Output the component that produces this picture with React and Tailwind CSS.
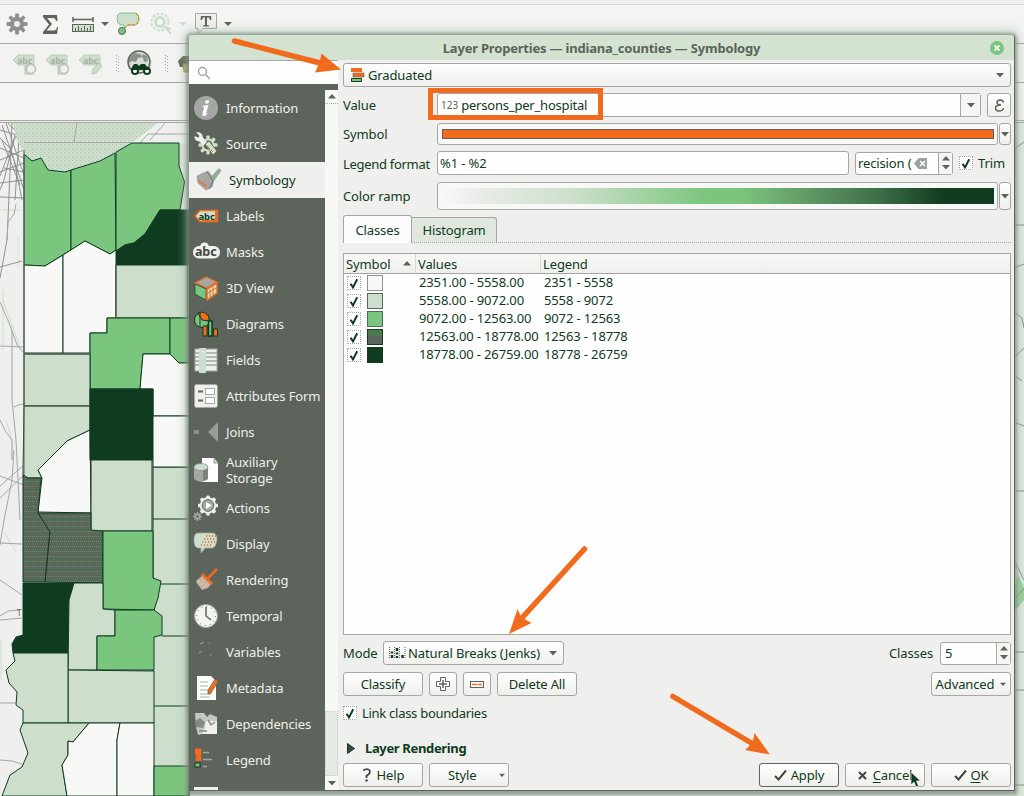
import React from "react";

const DARK = "#0f3b20";
const GRAY = "#5c645b";
const MID = "#a5a7a4";
const GREEN = "#7bc67e";
const LIGHT = "#cddfcc";
const PAPER = "#efefed";
const ORANGE = "#f26a1b";

/* ---------- small shared pieces ---------- */

function Down({ className = "" }) {
  return (
    <svg width="8" height="5" viewBox="0 0 8 5" className={"shrink-0 " + className}>
      <path d="M0 0h8L4 4.6z" fill={GRAY} />
    </svg>
  );
}

function Up({ className = "" }) {
  return (
    <svg width="8" height="5" viewBox="0 0 8 5" className={"shrink-0 " + className}>
      <path d="M0 4.6h8L4 0z" fill={GRAY} />
    </svg>
  );
}

function Check({ className = "" }) {
  return (
    <span className={"flex size-[14px] shrink-0 items-center justify-center rounded-[1px] border border-dotted border-[#a5a7a4] bg-[#fefefe] " + className}>
      <svg width="10" height="11" viewBox="0 0 10 11">
        <path d="M1.5 5.8 4 9.4 8.2 1.2" fill="none" stroke={DARK} strokeWidth="2" />
      </svg>
    </span>
  );
}

function Button({ className = "", children }) {
  return (
    <button className={"flex h-[24px] shrink-0 items-center justify-center rounded-[3px] border border-[#a5a7a4] bg-gradient-to-b from-[#fefefe] to-[#efefed] whitespace-nowrap " + className}>
      {children}
    </button>
  );
}

function Spinner() {
  return (
    <span className="flex h-full w-[14px] shrink-0 flex-col items-center justify-center gap-[4px] border-l border-[#a5a7a4] bg-[#f5f5f4]">
      <Up />
      <Down />
    </span>
  );
}

/* ---------- background map ---------- */

const counties = [
  [LIGHT, "153,467 189,467 189,796 153,796"],
  [GREEN, "24,154 32,161 41,158 48,170 65,172 71,170 71,250 45,266 24,265"],
  [GREEN, "71,170 100,161 115,153 116,250 110,254 85,241 71,250"],
  [GREEN, "116,152 132,143 179,143 179,166 184.5,182 180,210 160,210 145,234 134,243 125,245 116,251"],
  [DARK, "160,210 189,210 189,265 116,265 116,251 125,245 134,243 145,234"],
  ["#f8f8f7", "24,265 45,266 63,255 63,353 24,353"],
  ["#f8f8f7", "63,255 85,241 110,254 116,250 116,318 107,318 107,333 90,333 90,353 63,353"],
  [LIGHT, "116,265 188,265 188,318 116,318"],
  [GREEN, "107,318 170,318 170,354 143,354 140,389 90,389 90,333 107,333"],
  [GREEN, "170,318 189,318 189,363 179,363 170,354"],
  ["#f8f8f7", "143,354 170,354 179,363 189,363 189,416 153,416 153,389 140,389"],
  [LIGHT, "24,354 90,354 90,406 24,406"],
  [LIGHT, "24,406 90,406 90,430 67,441 38,470 42,478 28,478 23,475"],
  ["#f8f8f7", "90,430 67,441 38,470 42,478 38,512 91,513"],
  [DARK, "90,389 153,389 153,460 90,460"],
  ["#f8f8f7", "153,416 189,416 189,467 153,467"],
  [LIGHT, "91,460 152,460 152,531 91,531"],
  ["url(#hatch)", "23,475 28,478 41,478 38,512 50,532 45,582 23,582"],
  ["url(#hatch)", "38,513 91,513 91,530 103,531 103,583 45,582 50,532"],
  [GREEN, "103,531 153,531 153,578 161,581 158,598 154,610 103,609"],
  [DARK, "23,583 74,583 69,600 68,653 13,653 12,644 16,637 23,635"],
  [LIGHT, "74,583 103,583 103,609 115,610 115,636 97,636 97,670 68,670 69,600"],
  [GREEN, "115,610 154,610 162,616 162,635 154,637 154,670 97,670 97,636 115,636"],
  [LIGHT, "68,670 154,671 154,723 68,723"],
  [LIGHT, "13,653 68,653 68,723 23,723 23,710 16,705 17,692 9,683 6,670 15,661"],
  [LIGHT, "23,723 89,723 73,742 68,741 68,755 62,765 67,796 2,796 10,775 22,767 28,753 20,730"],
  ["#f8f8f7", "89,723 120,723 117,740 117,796 67,796 62,765 68,755 68,741 73,742"],
  ["#f8f8f7", "120,723 154,723 154,796 117,796 117,740"],
  [GREEN, "154,766 189,766 189,796 154,796"],
];

const roads = [
  "0,138 10,148 24,190", "2,125 14,160 22,200", "0,160 24,150", "0,172 24,163", "0,197 24,198", "18,123 4,180 0,190",
  "6,123 24,175", "0,130 24,137", "12,123 9,196 7,240 0,278", "0,267 22,261",
  "0,148 24,158", "8,123 24,140", "20,123 15,200", "0,183 24,180", "2,140 20,185", "0,176 14,140 20,128", "4,168 24,172",
];

const quietRoads = [
  "0,302 10,325 17,345 24,353", "0,346 24,347", "12,330 12,400 16,440 20,520", "0,420 6,432 12,440 12,460",
  "14,450 12,480 4,520 0,545", "0,543 22,544", "0,580 22,595", "0,620 22,618", "0,616 8,611 20,610",
  "0,703 16,703", "0,760 12,761 22,764", "0,486 24,465", "0,476 24,485", "0,498 24,475",
  "16,204 14,214 8,222 7,240", "14,407 18,405 24,404",
];

function MapCanvas() {
  return (
    <svg width="1024" height="673" viewBox="0 123 1024 673" className="block shrink-0">
      <defs>
        <pattern id="hatch" width="4" height="5" patternUnits="userSpaceOnUse">
          <rect width="4" height="5" fill={GRAY} />
          <path d="M0 1.5h4" stroke="#4f9a5a" strokeWidth="1" strokeDasharray="1 1" />
          <path d="M1 3.5h4" stroke="#467f50" strokeWidth="1" strokeDasharray="1 3" />
        </pattern>
        <pattern id="dots" width="4" height="4" patternUnits="userSpaceOnUse">
          <rect width="4" height="4" fill={LIGHT} />
          <rect width="1" height="1" fill="#b3bfb2" />
          <rect x="2" y="2" width="1" height="1" fill="#b9c6b8" />
        </pattern>
      </defs>
      <rect y="123" width="1024" height="673" fill={PAPER} />
      <path d="M3 290v60M6 420l6 20v20M1 640v40M4 532l12 20M0 210h22M3 300l18 50M18 236v30" stroke={LIGHT} fill="none" />
      <g fill="none" stroke="#858a84" strokeWidth="0.9">
        {roads.map((p) => <polyline key={p} points={p} />)}
      </g>
      <g fill="none" stroke="#a5a7a4" strokeWidth="1">
        {quietRoads.map((p) => <polyline key={p} points={p} />)}
      </g>
      <polygon points="13,123 158,123 132,143 100,161 65,172 48,170 41,158 32,161 24,154 16,138" fill="url(#dots)" />
      <path d="M77 123 74 142M24 142.500h107M150 140l15-17M140 143l8-9h41" stroke="#a5a7a4" fill="none" />
      <rect x="179" y="144" width="10" height="66" fill="#e2e6e1" />
      <g stroke={DARK} strokeWidth="1" strokeLinejoin="round">
        {counties.map(([fill, points]) => <polygon key={points} points={points} fill={fill} />)}
      </g>
      <path d="M153 519h36M161 584h28M162 636h27M154 706h35" stroke={DARK} />
      <path d="M24 150v325M116 265v53M24 354h66M24 406h66" stroke={GRAY} />
      <text x="17" y="616" fontSize="8" fill={GRAY} fontFamily="Noto Sans, sans-serif">T</text>
      <rect x="1014" y="123" width="10" height="673" fill="#e2e8e1" />
      <path d="M1014 590l4-16 6 14v12l-10 12z" fill={GREEN} opacity=".7" />
      <path d="M1014 123l10-4M1014 149l10-7M1014 225h10M1014 268l10-4M1014 312l8 6 2 10M1014 358l10-10M1014 375l8 6M1014 422l10 4M1014 491h10M1014 560l10 20M1014 600l10-12M1014 652h10M1014 690h10M1014 785h10" fill="none" stroke="#858a84" />
    </svg>
  );
}

/* ---------- toolbars ---------- */

function Gear({ x, y, r, fill, hole }) {
  return (
    <g transform={`translate(${x} ${y})`}>
      {[0, 45, 90, 135].map((a) => (
        <rect key={a} x={-r * 0.18} y={-r} width={r * 0.36} height={r * 2} rx="1" fill={fill} transform={`rotate(${a})`} />
      ))}
      <circle r={r * 0.68} fill={fill} />
      <circle r={r * 0.28} fill={hole} />
    </g>
  );
}

function TopBar() {
  return (
    <svg width="240" height="37" viewBox="0 5 240 37" className="block">
      <Gear x={17} y={24} r={10.5} fill="#8d918c" hole={PAPER} />
      <path d="M43 15h14l.5 6h-1.500q-.5-3-3-3h-6l5 6-5.500 6.500h7q3 0 3.500-3.500H58l-1 7H43v-2l6-7.500-6-7.500z" fill={GRAY} />
      <path d="M73 17v5M93 17v5M73 19.500h20" stroke={GRAY} strokeWidth="1.500" />
      <rect x="72.500" y="24.500" width="21" height="7" fill={LIGHT} stroke={GRAY} />
      <path d="M75.500 28v3M78.500 26v5M81.500 28v3M84.500 26v5M87.500 28v3M90.500 26v5" stroke={GRAY} />
      <path d="M101 22h8l-4 4z" fill={GRAY} />
      <path d="M120 13h15q4 1 4 5v2q-1 5-5 5h-6l-4 4v-4h-3q-4-1-4-6t3-6z" fill={LIGHT} stroke={GREEN} />
      <path d="M136 13.500q3 2 2.500 6-1 5-4 5.500h-7l-3 3" fill="none" stroke={ORANGE} strokeDasharray="3 1.500" />
      <circle cx="122" cy="31" r="3.500" fill={GREEN} stroke={GRAY} />
      <g fill="none" stroke={LIGHT} strokeWidth="2">
        <circle cx="160" cy="22" r="8.500" strokeDasharray="3 1.500" />
        <circle cx="160" cy="22" r="4.500" strokeWidth="3" />
        <path d="m165 27 6 7M162 26l9 3" />
      </g>
      <path d="M179 22h8l-4 4z" fill={LIGHT} />
      <path d="M195.500 13.500h21v15H203l-5 5v-5h-2.500z" fill={PAPER} stroke={MID} />
      <path d="M201 16h10l.5 4H210l-1-2.500h-2v7.500l2 .5v1h-6v-1l2-.5v-7.500h-2L202 20h-1.500z" fill={GRAY} />
      <path d="M224 22h8l-4 4z" fill={GRAY} />
    </svg>
  );
}

function LabelTag({ x, kind }) {
  return (
    <g transform={`translate(${x} 0)`}>
      <path d="M0 60l5-5h16v10H5z" fill={LIGHT} stroke="#bccdbb" />
      <text x="4" y="64" fontSize="9" fontWeight="700" fill="#a5b3a4" fontFamily="Noto Sans, sans-serif">abc</text>
      {kind === 2 ? (
        <path d="m13 74 1-5 6-6 3 3-6 7z" fill={LIGHT} stroke="#b5c2b4" />
      ) : (
        <g>
          <rect x="12" y="66" width="8" height="8" fill={LIGHT} stroke="#b5c2b4" />
          <circle cx="18" cy="69" r="4.500" fill={PAPER} stroke="#b5c2b4" strokeWidth="1.500" />
        </g>
      )}
    </g>
  );
}

function SecondBar() {
  return (
    <svg width="189" height="38" viewBox="0 44 189 38" className="block">
      <LabelTag x={13} kind={0} />
      <LabelTag x={46} kind={1} />
      <LabelTag x={79} kind={2} />
      <path d="M116.500 55v17M118.500 56v17M165.500 55v17M167.500 56v17" stroke={MID} strokeDasharray="1 2" />
      <circle cx="139" cy="62" r="11" fill="#d5ddd4" stroke={GRAY} strokeWidth="1.500" />
      <path d="M129 58l5-5 6 1 3 3-5 1-2 4-4-1-3 2zM142 54l5 2 1 5-4 1z" fill="#8d918c" />
      <path d="M134 64h3l2 2 2-2h4l3 5h-17z" fill={DARK} />
      <circle cx="135" cy="71" r="3" fill="#fff" stroke={DARK} strokeWidth="2" />
      <circle cx="147" cy="71" r="3" fill="#fff" stroke={DARK} strokeWidth="2" />
      <path d="M133 66h14l2 4h-18z" fill={DARK} />
      <path d="M178 61l5-5h6v11h-9z" fill={GRAY} />
      <path d="M183 64h6v8h-5z" fill={GREEN} stroke={ORANGE} />
    </svg>
  );
}

/* ---------- sidebar icons ---------- */

const icons = {
  info: (
    <>
      <circle cx="12" cy="12" r="12" fill="#a5a7a4" />
      <path d="M12.500 4.500q2-1 2.500.5t-1.500 2.500-2.200-.8.200-1.700zM9 9.800l5.500-.8-2.300 8.200q-.2 1.400 2-.5-2 3.800-4.500 3.500-2-.5-1-3.500l1.500-5.500H8.500z" fill="#fff" />
    </>
  ),
  source: (
    <>
      <Gear x={14} y={13} r={9.5} fill="#cddfcc" hole={GRAY} />
      <circle cx="14" cy="13" r="4.500" fill={GRAY} />
      <path d="M2 0q6.500-.5 7 6l4 4-3.500 3.500-4-4Q0 9 .5 4l3.500 1.500 1.500-1.500z" fill="#efefed" />
      <path d="m11 12 4-3 8 10-4 4z" fill="#cddfcc" stroke={GRAY} strokeWidth=".8" />
      <path d="m13 14 3 3M17 18l2 2" stroke={ORANGE} />
    </>
  ),
  symbology: (
    <>
      <path d="M0 8 11 3l6 8-2 8-6 3-8-7z" fill="#a5a7a4" stroke="#8d918c" strokeWidth=".7" />
      <path d="m13 10 9-10 2.500 2.500L17 13z" fill="#8fb08f" />
      <path d="m10 4 6 9-4 8" stroke="#6f756e" fill="none" />
      <path d="m2 13 8 6" stroke={ORANGE} strokeWidth="2" strokeDasharray="2 1" />
    </>
  ),
  labels: (
    <>
      <path d="M1 12 6 6.500h17.500v11H6z" fill={LIGHT} stroke={ORANGE} strokeWidth="1.300" />
      <path d="M22 7v10H8" stroke={ORANGE} strokeWidth="2" fill="none" />
      <text x="4.500" y="15.500" fontSize="9.500" fontWeight="700" fill={DARK} fontFamily="Noto Sans, sans-serif">abc</text>
    </>
  ),
  masks: (
    <>
      <rect x="-1" y="6" width="27" height="12.500" rx="6" fill="#efefed" />
      <circle cx="10.500" cy="7" r="4.500" fill="#efefed" />
      <text x="1" y="15.500" fontSize="12.500" fontWeight="700" fill="#3c4a3e" fontFamily="Noto Sans, sans-serif">abc</text>
    </>
  ),
  cube: (
    <>
      <path d="m1 7 11-6 11 5-10 6z" fill="#a5a7a4" stroke={ORANGE} strokeWidth="1.500" strokeDasharray="3 1" />
      <path d="m1 8 11 5v11L1 18z" fill={GREEN} stroke={DARK} strokeWidth=".6" />
      <path d="m13 13 10-6v10l-10 7z" fill={LIGHT} stroke={ORANGE} strokeWidth="1.500" />
      <path d="m16 13v8m3-10v8m-5-2 8-5" stroke={ORANGE} />
    </>
  ),
  diagrams: (
    <>
      <circle cx="8" cy="8" r="7.500" fill={GREEN} stroke={DARK} />
      <path d="M8 8 4 1q7-3 11 4v4z" fill={ORANGE} stroke={DARK} />
      <path d="M6 1v14" stroke={DARK} />
      <path d="M9 14h4v10H9z" fill={ORANGE} stroke={DARK} />
      <path d="M14.500 9h3.500v15h-3.500z" fill={GREEN} stroke={DARK} strokeWidth="1.500" />
      <path d="M19.500 17h4v7h-4z" fill={ORANGE} stroke={DARK} />
    </>
  ),
  fields: (
    <>
      <rect x="1" y="1" width="22" height="22" fill="#efefed" stroke="#a5a7a4" />
      <path d="M12 5h11M12 9h11M12 13h11M12 17h11M1 5h4M1 9h4M1 13h4M1 17h4" stroke="#a5a7a4" strokeWidth="1.500" />
      <path d="M5 0h7v25H5z" fill={LIGHT} />
      <path d="M7 5l2-2 2 2" stroke="#efefed" fill="none" />
    </>
  ),
  form: (
    <>
      <rect x=".5" y=".5" width="23" height="23" rx="2" fill="#efefed" stroke="#a5a7a4" />
      <path d="M4 7.500h5M4 16.500h5" stroke={GRAY} strokeWidth="2" />
      <rect x="11.500" y="4.500" width="9" height="6" fill="#fff" stroke="#a5a7a4" />
      <rect x="11.500" y="13.500" width="9" height="6" fill="#fff" stroke="#a5a7a4" />
    </>
  ),
  joins: (
    <>
      <rect x="0" y="10" width="5" height="4" fill="#8d918c" />
      <path d="M24 2v20L14 12z" fill="#9a9e99" />
    </>
  ),
  storage: (
    <>
      <path d="M8 0h12l4 5v19H8z" fill="#fefefe" />
      <path d="M20 0v5h4" fill={LIGHT} stroke={GRAY} strokeWidth=".6" />
      <path d="M0 9v12q7 6 14 0V9z" fill="#a5a7a4" />
      <path d="M9 10v13l5-2V9z" fill="#7d827c" />
      <ellipse cx="7" cy="9" rx="7" ry="3.500" fill={LIGHT} stroke="#858a84" strokeWidth=".7" />
    </>
  ),
  actions: (
    <>
      <Gear x={14} y={9.5} r={10} fill="#efefed" hole="#a5a7a4" />
      <circle cx="14" cy="9.500" r="8.300" fill="#efefed" />
      <circle cx="14" cy="9.500" r="5.800" fill="#a5a7a4" stroke={GRAY} />
      <path d="M12 6v7l6-3.500z" fill="#fff" />
      <Gear x={3.5} y={20.5} r={4.5} fill="#a5a7a4" hole={GRAY} />
    </>
  ),
  display: (
    <>
      <path d="M4 1h15q4 1 4 6-1 9-5 9h-7l-4 5v-5H4Q0 15 0 8t4-7z" fill={LIGHT} stroke="#a5a7a4" strokeWidth=".7" />
      <path d="M12 4h10M10 7h12M8 10h14M7 13h12" stroke={ORANGE} strokeDasharray="1.200 1.800" strokeWidth="1.400" />
    </>
  ),
  rendering: (
    <>
      <path d="M23 1 13 11" stroke={ORANGE} strokeWidth="2.500" />
      <path d="M3 12 9 7l8 9-3 4-6 2-6-8z" fill="#c9b3a0" />
      <path d="m9 5 10 10-2 2L7 7z" fill={ORANGE} />
      <path d="m4 12 7 8M7 11l6 7" stroke={LIGHT} strokeDasharray="1 1" />
    </>
  ),
  clock: (
    <>
      <circle cx="12" cy="12" r="11.500" fill="#f4f4f3" stroke="#a5a7a4" />
      <path d="M12 3v9l5 4" stroke={GRAY} fill="none" strokeWidth="1.500" />
      <circle cx="12" cy="12" r="9.500" fill="none" stroke={GRAY} strokeDasharray="1 3.970" />
    </>
  ),
  variables: (
    <path d="M6 4l4-2M5 13l3-2M15 3h1M16 15h1" stroke="#a5a7a4" />
  ),
  metadata: (
    <>
      <path d="M3 0h14l5 5v19H3z" fill="#fefefe" />
      <path d="M6 6h8M6 10h8M6 14h10M6 18h12M6 21h10" stroke="#9db79c" />
      <path d="m21 3 3.500 2-7.500 12-3 1v-4z" fill={ORANGE} stroke={GRAY} strokeWidth=".7" />
    </>
  ),
  dependencies: (
    <>
      <path d="M1 1h9l3 4 3-3 7 3v7l-3 2v8H8l-4 1-2-8z" fill="#c3c8c2" />
      <path d="M12 9h11v13H8l3-6z" fill="#efefed" />
      <path d="M1 9l5-3 5 4-2 6-7-1z" fill="#858a84" />
      <path d="M5 19h8M14 8l3 5 4-3" stroke="#858a84" fill="none" strokeWidth="1.500" />
    </>
  ),
  legend: (
    <>
      <path d="M1 .5h6.500V6L7 7l.5 6h-6L2 7 1 6z" fill={ORANGE} />
      <rect x="1" y="15" width="5" height="4" fill={GREEN} stroke={DARK} />
      <path d="M9 4.500h6M9 11.500h9M9 18.500h4" stroke="#a5a7a4" strokeWidth="1.500" />
    </>
  ),
};

const pages = [
  ["info", "Information"], ["source", "Source"], ["symbology", "Symbology"], ["labels", "Labels"], ["masks", "Masks"],
  ["cube", "3D View"], ["diagrams", "Diagrams"], ["fields", "Fields"], ["form", "Attributes Form"], ["joins", "Joins"],
  ["storage", "Auxiliary Storage"], ["actions", "Actions"], ["display", "Display"], ["rendering", "Rendering"],
  ["clock", "Temporal"], ["variables", "Variables"], ["metadata", "Metadata"], ["dependencies", "Dependencies"], ["legend", "Legend"],
];

function rowClass(id) {
  if (id === "symbology") return "h-[36px] bg-[#efefed] pl-[8px] gap-[8px] text-[#0f3b20]";
  if (id === "storage") return "h-[40px] pl-[5px] gap-[8px] text-[#efefed]";
  return "h-[36px] pl-[5px] gap-[8px] text-[#efefed]";
}

function Sidebar() {
  return (
    <div className="flex w-[149px] shrink-0 flex-col">
      <div className="flex h-[24px] shrink-0 items-center border-t border-[#a5a7a4] bg-[#fefefe] pl-[8px]">
        <svg width="14" height="14" viewBox="0 0 14 14" fill="none" stroke={MID} strokeWidth="1.500">
          <circle cx="5.500" cy="5.500" r="4" /><path d="m8.500 8.500 4.500 4.500" />
        </svg>
      </div>
      <div className="flex min-h-0 flex-1 bg-[#5c645b]">
        <ul className="flex w-[136px] shrink-0 flex-col overflow-hidden pt-[6px]">
          {pages.map(([id, label]) => (
            <li key={id} className={"flex shrink-0 items-center " + rowClass(id)}>
              <svg width="24" height="24" viewBox="0 0 24 24" overflow="visible" className="shrink-0">{icons[id]}</svg>
              <span className={"leading-[16px] " + (id === "storage" ? "w-[60px]" : "whitespace-nowrap")}>{label}</span>
            </li>
          ))}
          <li className="ml-[5px] mt-[9px] h-[4px] w-[24px] shrink-0 bg-[#efefed]" />
        </ul>
        <div className="mt-[6px] flex flex-1 flex-col items-center bg-[#f8f8f7]">
          <div className="flex h-[14px] w-full shrink-0 items-center justify-center border-b border-dotted border-[#a5a7a4]"><Up /></div>
          <div className="flex-1" />
          <div className="h-[65px] w-full shrink-0 border border-dotted border-[#bfd0be] bg-[#e3eae2]" />
          <div className="flex h-[14px] shrink-0 items-center"><Down /></div>
        </div>
      </div>
    </div>
  );
}

/* ---------- symbology page ---------- */

const classes = [
  ["bg-[#f8f8f7] border-[#8f948e]", "2351.00 - 5558.00", "2351 - 5558"],
  ["bg-[#cddfcc] border-[#5c645b]", "5558.00 - 9072.00", "5558 - 9072"],
  ["bg-[#7bc67e] border-[#5c645b]", "9072.00 - 12563.00", "9072 - 12563"],
  ["bg-gradient-to-b from-[#4b7a52] from-40% to-[#5c645b] to-40% border-[#0f3b20]", "12563.00 - 18778.00", "12563 - 18778"],
  ["bg-[#0f3b20] border-[#0f3b20]", "18778.00 - 26759.00", "18778 - 26759"],
];

function ClassTable() {
  return (
    <div className="mt-[10px] flex h-[382px] shrink-0 flex-col border border-[#a5a7a4] bg-[#fefefe]">
      <div className="flex h-[20px] shrink-0 items-center border-b border-[#a5a7a4] bg-gradient-to-b from-[#f8f8f7] to-[#efefed]">
        <div className="flex h-full w-[72px] items-center justify-between border-r border-[#cddfcc] pl-[2px] pr-[4px]">Symbol<Up /></div>
        <div className="flex h-full w-[125px] items-center border-r border-[#cddfcc] pl-[2px]">Values</div>
        <div className="pl-[2px]">Legend</div>
      </div>
      {classes.map(([swatch, range, legend]) => (
        <div key={range} className="flex h-[18px] shrink-0 items-center leading-[16px]">
          <Check className="ml-[3px]" />
          <span className={"ml-[6px] size-[16px] shrink-0 border " + swatch} />
          <span className="mb-[2px] ml-[36px] w-[125px] whitespace-nowrap">{range}</span>
          <span className="mb-[2px] whitespace-nowrap">{legend}</span>
        </div>
      ))}
    </div>
  );
}

function Tick() {
  return (
    <svg width="13" height="12" viewBox="0 0 13 12"><path d="m1 7 3.500 3.500L12 1.500" fill="none" stroke="#3c4a3e" strokeWidth="2" /></svg>
  );
}

function SymbologyPage() {
  return (
    <div className="flex min-w-0 flex-1 flex-col bg-[#efefed] pl-[5px] pr-[3px] pt-[3px] text-[#0f3b20]">
      <Button className="w-full justify-start! pl-[7px] pr-[6px]">
        <svg width="14" height="14" viewBox="0 0 14 14">
          <path d="M0 0h11v4H0z" fill={ORANGE} />
          <path d="M2 5h11v4H2z" fill={ORANGE} stroke={GRAY} strokeWidth=".6" />
          <path d="M.5 10.500h10v3H.5z" fill={GREEN} stroke={DARK} />
        </svg>
        <span className="ml-[3px] flex-1 text-left">Graduated</span>
        <Down />
      </Button>

      <div className="mt-[6px] flex h-[24px] shrink-0 items-center">
        <span className="w-[94px]">Value</span>
        <div className="flex h-full w-[544px] items-center rounded-[3px] border border-[#a5a7a4] bg-[#fefefe]">
          <span className="ml-[3px] text-[10px] tracking-[0px] text-[#5c645b]">123</span>
          <span className="ml-[3px] flex-1 tracking-[-0.2px]">persons_per_hospital</span>
          <span className="flex h-full w-[20px] items-center justify-center border-l border-[#a5a7a4] bg-[#f5f5f4]"><Down /></span>
        </div>
        <Button className="ml-[6px] w-[24px]">
          <svg width="11" height="13" viewBox="0 0 11 13"><path d="M9.500 3.500Q9 1 6 1 3 1.200 3 3.500T7 6Q1.500 6 1.500 9T5 12q4 0 4.500-3" fill="none" stroke={GRAY} strokeWidth="1.500" /></svg>
        </Button>
      </div>

      <div className="mt-[6px] flex h-[22px] shrink-0 items-center">
        <span className="w-[94px]">Symbol</span>
        <div className="flex h-full w-[561px] items-center rounded-[3px] border border-[#a5a7a4] bg-[#f8f8f7] pl-[4px] pr-[3px]">
          <div className="h-[10px] w-full border border-[#5c645b] bg-[#f26a1b]" />
        </div>
        <Button className="ml-[1px] h-full! w-[12px]"><Down /></Button>
      </div>

      <div className="mt-[6px] flex h-[24px] shrink-0 items-center">
        <span className="w-[94px] pt-[1px] tracking-[-0.3px] whitespace-nowrap">Legend format</span>
        <div className="flex h-full w-[412px] items-center rounded-[3px] border border-[#a5a7a4] bg-[#fefefe] pl-[2px]">%1 - %2</div>
        <div className="ml-[6px] flex h-[23px] w-[98px] items-center rounded-[3px] border border-[#a5a7a4] bg-[#fefefe] pl-[2px]">
          <span className="w-[53px] shrink-0 whitespace-nowrap">recision (</span>
          <svg width="14" height="11" viewBox="0 0 14 11" className="ml-[3px] mr-auto"><path d="M0 5.500 4.500 0H13v11H4.500z" fill="#9da19c" /><path d="m6 3 5 5M11 3 6 8" stroke="#fff" strokeWidth="1.500" /></svg>
          <Spinner />
        </div>
        <Check className="ml-[6px]" />
        <span className="ml-[5px]">Trim</span>
      </div>

      <div className="mt-[7px] flex h-[28px] shrink-0 items-center">
        <span className="w-[94px]">Color ramp</span>
        <div className="flex h-full w-[561px] items-center rounded-[3px] border border-[#a5a7a4] bg-[#f8f8f7] pl-[2px] pr-[3px]">
          <div className="h-[16px] w-full bg-[linear-gradient(to_right,#f8f8f7_0%,#e8ece7_8%,#cddfcc_24%,#7bc67e_48%,#7bc67e_54%,#5c8f60_69%,#41734a_78%,#0f3b20_91%)]" />
        </div>
        <Button className="ml-[1px] h-full! w-[12px]"><Down /></Button>
      </div>

      <div className="mt-[5px] flex h-[28px] shrink-0 items-end border-b border-dotted border-[#a5a7a4]">
        <div className="-mb-px flex h-[28px] w-[69px] items-center justify-center rounded-t-[3px] border border-b-0 border-[#a5a7a4] bg-[#fcfcfc]">Classes</div>
        <div className="flex h-[25px] w-[85px] items-center justify-center rounded-tr-[3px] border border-b-0 border-l-0 border-[#a5a7a4] bg-[#e0e7df]">Histogram</div>
      </div>

      <ClassTable />

      <div className="mt-[6px] flex h-[24px] shrink-0 items-center">
        <span className="w-[40px]">Mode</span>
        <Button className="w-[181px] justify-start! pl-[5px] pr-[6px]">
          <svg width="17" height="12" viewBox="0 0 17 12">
            <path d="M.5 0v12M5.500 0v12M10.500 0v12M16 0v12" stroke={GRAY} strokeDasharray="1 1" />
            <path d="M3 4.500v2M3 8v3M8 1v3M8 5.500v2M8 9v2M13.500 8v3" stroke={DARK} strokeWidth="2.500" />
          </svg>
          <span className="ml-[2px] flex-1 text-left">Natural Breaks (Jenks)</span>
          <Down />
        </Button>
        <span className="ml-auto">Classes</span>
        <div className="ml-[7px] flex h-[23px] w-[71px] items-center justify-between rounded-[3px] border border-[#a5a7a4] bg-[#fefefe] pl-[4px]">
          5<Spinner />
        </div>
      </div>

      <div className="mt-[7px] flex shrink-0 items-center gap-[6px]">
        <Button className="w-[80px]">Classify</Button>
        <Button className="w-[28px]">
          <svg width="14" height="14" viewBox="0 0 14 14"><path d="M4.500.5h5v4h4v5h-4v4h-5v-4h-4v-5h4z" fill="#fefefe" stroke={GRAY} /><path d="M7 3v8M3 7h8" stroke={GRAY} strokeWidth="1.500" /></svg>
        </Button>
        <Button className="w-[28px]">
          <svg width="14" height="7" viewBox="0 0 14 7"><rect x=".5" y=".5" width="13" height="6" fill="#fefefe" stroke={GRAY} /><path d="M2 3.500h10" stroke={ORANGE} strokeWidth="1.500" strokeDasharray="5 1" /></svg>
        </Button>
        <Button className="w-[80px]">Delete All</Button>
        <Button className="ml-auto w-[80px] gap-[6px]">Advanced<Down className="w-[6px]" /></Button>
      </div>

      <div className="mt-[10px] flex h-[14px] shrink-0 items-center gap-[5px] tracking-[-0.28px]"><Check />Link class boundaries</div>

      <div className="mt-[18px] flex h-[20px] shrink-0 items-center pl-[4px] font-bold tracking-[-0.35px]">
        <svg width="8" height="11" viewBox="0 0 8 11" className="mr-[10px]"><path d="M.5.500 7.500 5.500.5 10.500z" fill="#3c4a3e" stroke={DARK} /></svg>
        <span>Layer Rendering</span>
      </div>

      <div className="mt-[5px] flex shrink-0 items-center gap-[6px]">
        <Button className="w-[80px] gap-[6px]">
          <svg width="9" height="14" viewBox="0 0 9 14"><path d="M1.200 2.500Q4 .5 6.500 1.500T7 6L4.500 8v2" fill="none" stroke="#3c4a3e" strokeWidth="1.800" /><circle cx="4.500" cy="12.500" r="1.200" fill="#3c4a3e" /></svg>
          Help
        </Button>
        <Button className="w-[80px] justify-between! pl-[18px] pr-[3px]">Style<Down className="w-[6px]" /></Button>
        <Button className="ml-auto w-[80px] gap-[4px] border-[#5c645b]!"><Tick />Apply</Button>
        <Button className="w-[80px] gap-[6px]">
          <svg width="9" height="9" viewBox="0 0 9 9"><path d="m1 1 7 7M8 1 1 8" stroke="#3c4a3e" strokeWidth="2" /></svg>
          <span><u className="underline-offset-2">C</u>ancel</span>
        </Button>
        <Button className="w-[80px] gap-[4px]"><Tick /><span><u className="underline-offset-2">O</u>K</span></Button>
      </div>
    </div>
  );
}

function Dialog() {
  return (
    <div className="absolute left-[189px] top-[35px] flex h-[756px] w-[825px] flex-col rounded-t-[3px] border-b border-[#5c645b] bg-[#efefed] shadow-[1px_0_0_0_#5c645b,0_1px_3px_3px_rgba(120,128,120,0.6),0_0_9px_5px_rgba(150,180,150,0.5)]">
      <div className="flex h-[25px] shrink-0 items-center rounded-t-[3px] bg-[#d3e2d1] pr-[10px] font-bold tracking-[-0.2px] text-[#5c645b]">
        <div className="flex-1 pl-[24px] text-center">Layer Properties — indiana_counties — Symbology</div>
        <svg width="14" height="14" viewBox="0 0 14 14"><circle cx="7" cy="7" r="7" fill={GREEN} /><path d="m4.500 4.500 5 5M9.500 4.500l-5 5" stroke="#efefed" strokeWidth="2" /></svg>
      </div>
      <div className="flex min-h-0 flex-1">
        <Sidebar />
        <SymbologyPage />
      </div>
    </div>
  );
}

function Annotations() {
  return (
    <svg width="1024" height="796" viewBox="0 0 1024 796" className="pointer-events-none absolute inset-0">
      <g stroke={ORANGE} strokeWidth="5.500" strokeLinecap="round">
        <path d="M234.500 41 320 63M584.500 549 521 619M673 696.500 753 744" />
      </g>
      <g fill={ORANGE}>
        <path d="m341 69.500-19.500-16-2 9-4.500 10z" />
        <path d="m509 634 8.500-25 4 8.500 10 5.500z" />
        <path d="m770 754.500-15.500-21.500-2 10-7.500 7z" />
      </g>
      <rect x="430.500" y="90.500" width="170" height="27" fill="none" stroke={ORANGE} strokeWidth="5" />
      <path d="M911 772v13l3-3 2 5 2.500-1-2-5h4z" fill={DARK} stroke="#efefed" strokeWidth=".7" />
    </svg>
  );
}

export default function App() {
  return (
    <div className="relative flex h-[796px] w-[1024px] flex-col overflow-hidden bg-[#efefed] font-['Noto_Sans',sans-serif] text-[13px] leading-[18px] tracking-[-0.13px]">
      <div className="h-[5px] shrink-0 border-b border-[#cddfcc]" />
      <div className="h-[38px] shrink-0 bg-[#f4f4f3]"><TopBar /></div>
      <div className="h-[40px] shrink-0 border-y border-[#a5a7a4] bg-[#f2f2f1]"><SecondBar /></div>
      <div className="h-[38px] shrink-0 border-b border-[#a5a7a4] bg-[#f4f4f3]" />
      <div className="h-[2px] shrink-0 border-b border-[#a5a7a4]" />
      <MapCanvas />
      <Dialog />
      <Annotations />
    </div>
  );
}
